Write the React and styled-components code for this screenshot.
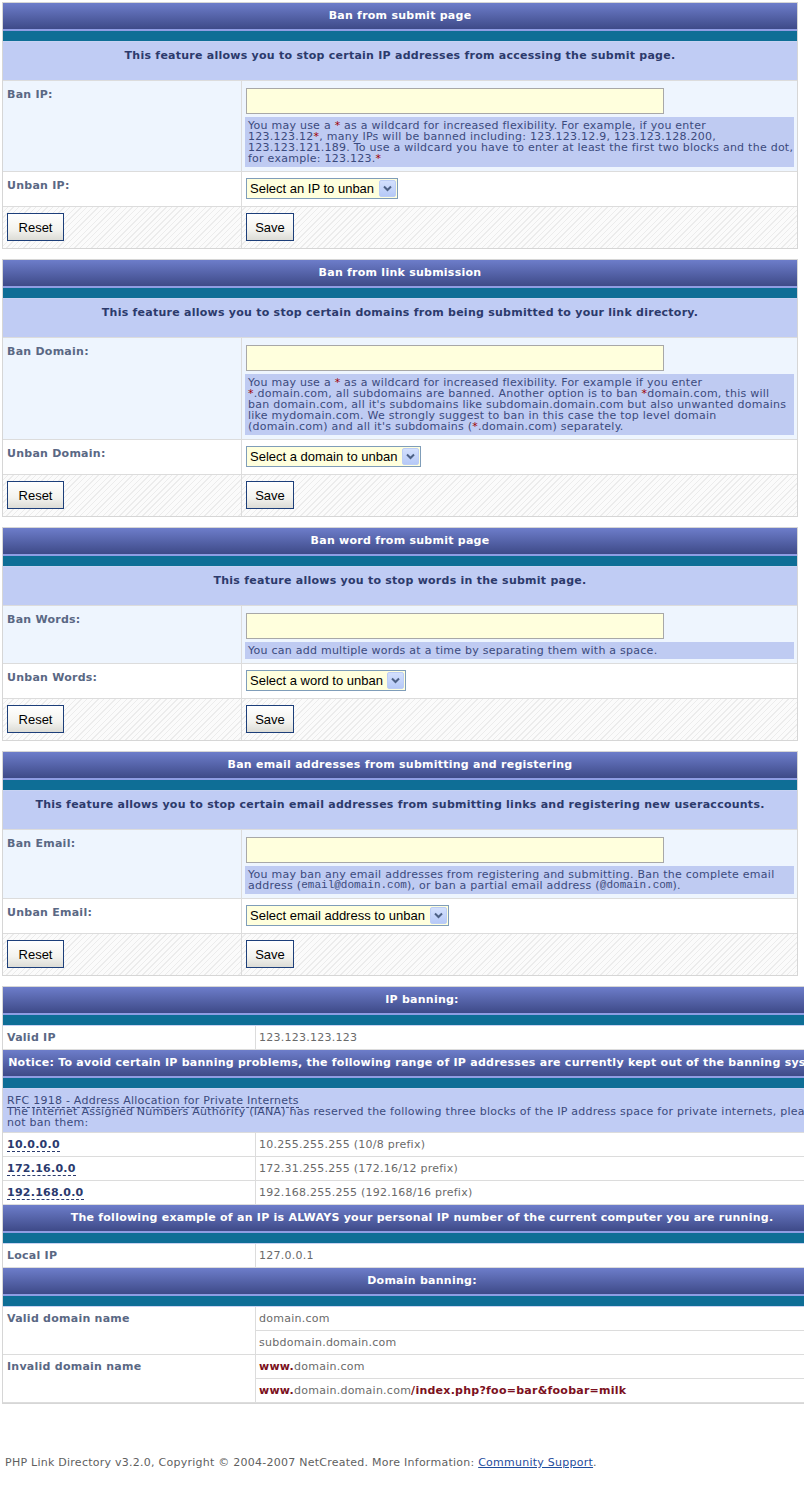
import React from 'react';
import styled, { createGlobalStyle } from 'styled-components';

const GlobalStyle = createGlobalStyle`
  html, body { margin: 0; padding: 0; background: #fff; overflow-x: hidden; }
  body {
    font-family: "DejaVu Sans", Verdana, sans-serif;
    font-size: 11px;
    letter-spacing: 0.25px;
    color: #3b4a7d;
  }
`;

const Page = styled.div`
  padding: 2px 0 0 2px;
  width: 860px;
`;

const Section = styled.section`
  width: ${p => p.$width}px;
  border: 1px solid #d6d6d6;
  margin-bottom: 10px;
  background: #fff;
`;

const HeaderBar = styled.div`
  height: 26px;
  line-height: 26px;
  background: linear-gradient(#6d7dca, #3e4a88);
  border-bottom: 2px solid #8f9de3;
  color: #fff;
  font-weight: bold;
  text-align: center;
  white-space: nowrap;
`;

const TealBar = styled.div`
  height: 10px;
  background: #0e6e96;
  border-bottom: 1px solid #c8d2f2;
`;

const Desc = styled.div`
  background: #c0ccf4;
  color: #2c3a6c;
  font-weight: bold;
  text-align: center;
  line-height: 14px;
  padding: 7px 4px 17px;
  border-bottom: 1px solid #dcdcdc;
`;

const rowBg = {
  alt: '#eef5fe',
  plain: '#ffffff',
  hatch: 'repeating-linear-gradient(135deg, #fbfbfb 0px, #fbfbfb 3px, #ececec 3px, #ececec 4px)',
};

const FormRow = styled.div`
  display: grid;
  grid-template-columns: 239px minmax(0, 1fr);
  background: ${p => rowBg[p.$tone]};
  border-bottom: ${p => (p.$last ? 'none' : '1px solid #dcdcdc')};
`;

const LabelCell = styled.div`
  border-right: 1px solid #dcdcdc;
  padding: 7px 4px;
  line-height: 13px;
  font-weight: bold;
  color: #5a6884;
`;

const ValueCell = styled.div`
  min-width: 0;
  padding: ${p => p.$pad};
`;

const ButtonCell = styled.div`
  display: flex;
  align-items: flex-start;
  padding: 6px 4px 7px;
  border-right: ${p => (p.$divider ? '1px solid #dcdcdc' : 'none')};
`;

const TextInput = styled.input`
  display: block;
  box-sizing: border-box;
  width: 418px;
  height: 26px;
  margin: 0;
  background: #ffffdd;
  border: 1px solid #a8a8a8;
  font-family: "DejaVu Sans", Verdana, sans-serif;
  font-size: 11px;
`;

const Hint = styled.div`
  margin: 3px 0 0 -1px;
  padding: 3px;
  background: #bfcbf2;
  line-height: 11px;
  color: #3b4a7d;
  white-space: nowrap;
`;

const Star = styled.span`
  color: #a00000;
`;

const Mono = styled.span`
  font-family: "Liberation Mono", "Courier New", monospace;
  font-size: 11px;
  line-height: 11px;
  vertical-align: top;
  letter-spacing: 0;
`;

const SelectWrap = styled.div`
  display: flex;
  align-items: center;
  box-sizing: border-box;
  width: ${p => p.$width}px;
  height: 21px;
  border: 1px solid #7f9db9;
  background: #ffffdd;
`;

const Select = styled.select`
  appearance: none;
  -webkit-appearance: none;
  flex: 1;
  min-width: 0;
  height: 19px;
  border: none;
  background: transparent;
  padding: 0 0 0 3px;
  margin: 0;
  font-family: "Liberation Sans", Arial, sans-serif;
  font-size: 13px;
  letter-spacing: 0;
  color: #000;
  outline: none;
`;

const ArrowBox = styled.span`
  display: flex;
  align-items: center;
  justify-content: center;
  box-sizing: border-box;
  width: 17px;
  height: 17px;
  margin-right: 1px;
  border: 1px solid #bccdf5;
  border-radius: 2px;
  background: linear-gradient(#d3e0fd, #b6c9f7);
`;

const Button = styled.button`
  box-sizing: border-box;
  width: ${p => p.$w}px;
  height: 28px;
  padding: 0;
  border: 1px solid #1d3f7a;
  border-radius: 0;
  background: linear-gradient(#ffffff, #f3f3ef 60%, #dcdcd6);
  font-family: "Liberation Sans", Arial, sans-serif;
  font-size: 13px;
  letter-spacing: 0;
  color: #000;
`;

const InfoGrid = styled.div`
  display: grid;
  grid-template-columns: 253px minmax(0, 1fr);
`;

const InfoLabel = styled.div`
  grid-row: span ${p => p.$span || 1};
  border-right: 1px solid #dcdcdc;
  border-bottom: 1px solid #dcdcdc;
  padding: 5px 4px;
  line-height: 13px;
  font-weight: bold;
  color: #5a6884;
`;

const InfoValue = styled.div`
  border-bottom: 1px solid #dcdcdc;
  padding: 5px 3px;
  line-height: 13px;
  color: #6a6a6a;
  white-space: nowrap;
`;

const DashLink = styled.a`
  font-weight: bold;
  color: #2b3a6e;
  text-decoration: none;
  border-bottom: 1px dashed #2b3a6e;
`;

const InfoDesc = styled.div`
  background: #c0ccf4;
  padding: 6px 4px 4px;
  line-height: 11px;
  color: #3b4a7d;
  border-bottom: 1px solid #dcdcdc;
  white-space: nowrap;
`;

const RfcLink = styled.span`
  border-bottom: 1px dashed #3b4a7d;
`;

const Red = styled.span`
  color: #7b1020;
  font-weight: bold;
`;

const Footer = styled.div`
  padding: 42px 3px 21px;
  color: #5f5f5f;
  line-height: 13px;
  border-bottom: 1px solid #eeeeee;
  width: 800px;
`;

const FooterLink = styled.a`
  color: #1f4d9c;
  text-decoration: underline;
`;

const Chevron = () => (
  <svg width="9" height="7" viewBox="0 0 9 7">
    <path d="M1 1.5 L4.5 5 L8 1.5" fill="none" stroke="#4d6185" strokeWidth="2" />
  </svg>
);

const SelectBox = ({ width, text }) => (
  <SelectWrap $width={width}>
    <Select defaultValue="">
      <option value="">{text}</option>
    </Select>
    <ArrowBox><Chevron /></ArrowBox>
  </SelectWrap>
);

const BanSection = ({ title, desc, banLabel, unbanLabel, hint, selectText, selectWidth }) => (
  <Section $width={794}>
    <HeaderBar>{title}</HeaderBar>
    <TealBar />
    <Desc>{desc}</Desc>
    <FormRow $tone="alt">
      <LabelCell>{banLabel}</LabelCell>
      <ValueCell $pad="7px 3px 4px 4px">
        <TextInput type="text" />
        <Hint>{hint}</Hint>
      </ValueCell>
    </FormRow>
    <FormRow $tone="plain">
      <LabelCell>{unbanLabel}</LabelCell>
      <ValueCell $pad="6px 4px 7px 4px">
        <SelectBox width={selectWidth} text={selectText} />
      </ValueCell>
    </FormRow>
    <FormRow $tone="hatch" $last>
      <ButtonCell $divider>
        <Button type="reset" $w={57}>Reset</Button>
      </ButtonCell>
      <ButtonCell>
        <Button type="submit" $w={48}>Save</Button>
      </ButtonCell>
    </FormRow>
  </Section>
);

export default function App() {
  return (
    <>
      <GlobalStyle />
      <Page>
        <BanSection
          title="Ban from submit page"
          desc="This feature allows you to stop certain IP addresses from accessing the submit page."
          banLabel="Ban IP:"
          unbanLabel="Unban IP:"
          selectText="Select an IP to unban"
          selectWidth={152}
          hint={<>
            You may use a <Star>*</Star> as a wildcard for increased flexibility. For example, if you enter<br />
            123.123.12<Star>*</Star>, many IPs will be banned including: 123.123.12.9, 123.123.128.200,<br />
            123.123.121.189. To use a wildcard you have to enter at least the first two blocks and the dot,<br />
            for example: 123.123.<Star>*</Star>
          </>}
        />
        <BanSection
          title="Ban from link submission"
          desc="This feature allows you to stop certain domains from being submitted to your link directory."
          banLabel="Ban Domain:"
          unbanLabel="Unban Domain:"
          selectText="Select a domain to unban"
          selectWidth={175}
          hint={<>
            You may use a <Star>*</Star> as a wildcard for increased flexibility. For example if you enter<br />
            <Star>*</Star>.domain.com, all subdomains are banned. Another option is to ban <Star>*</Star>domain.com, this will<br />
            ban domain.com, all it's subdomains like subdomain.domain.com but also unwanted domains<br />
            like mydomain.com. We strongly suggest to ban in this case the top level domain<br />
            (domain.com) and all it's subdomains (<Star>*</Star>.domain.com) separately.
          </>}
        />
        <BanSection
          title="Ban word from submit page"
          desc="This feature allows you to stop words in the submit page."
          banLabel="Ban Words:"
          unbanLabel="Unban Words:"
          selectText="Select a word to unban"
          selectWidth={160}
          hint="You can add multiple words at a time by separating them with a space."
        />
        <BanSection
          title="Ban email addresses from submitting and registering"
          desc="This feature allows you to stop certain email addresses from submitting links and registering new useraccounts."
          banLabel="Ban Email:"
          unbanLabel="Unban Email:"
          selectText="Select email address to unban"
          selectWidth={203}
          hint={<>
            You may ban any email addresses from registering and submitting. Ban the complete email<br />
            address (<Mono>email@domain.com</Mono>), or ban a partial email address (<Mono>@domain.com</Mono>).
          </>}
        />

        <Section $width={838}>
          <HeaderBar>IP banning:</HeaderBar>
          <TealBar />
          <InfoGrid>
            <InfoLabel>Valid IP</InfoLabel>
            <InfoValue>123.123.123.123</InfoValue>
          </InfoGrid>
          <HeaderBar>Notice: To avoid certain IP banning problems, the following range of IP addresses are currently kept out of the banning system!</HeaderBar>
          <TealBar />
          <InfoDesc>
            <RfcLink>RFC 1918 - Address Allocation for Private Internets</RfcLink><br />
            The Internet Assigned Numbers Authority (IANA) has reserved the following three blocks of the IP address space for private internets, please do<br />
            not ban them:
          </InfoDesc>
          <InfoGrid>
            <InfoLabel><DashLink href="#">10.0.0.0</DashLink></InfoLabel>
            <InfoValue>10.255.255.255 (10/8 prefix)</InfoValue>
            <InfoLabel><DashLink href="#">172.16.0.0</DashLink></InfoLabel>
            <InfoValue>172.31.255.255 (172.16/12 prefix)</InfoValue>
            <InfoLabel><DashLink href="#">192.168.0.0</DashLink></InfoLabel>
            <InfoValue>192.168.255.255 (192.168/16 prefix)</InfoValue>
          </InfoGrid>
          <HeaderBar>The following example of an IP is ALWAYS your personal IP number of the current computer you are running.</HeaderBar>
          <TealBar />
          <InfoGrid>
            <InfoLabel>Local IP</InfoLabel>
            <InfoValue>127.0.0.1</InfoValue>
          </InfoGrid>
          <HeaderBar>Domain banning:</HeaderBar>
          <TealBar />
          <InfoGrid>
            <InfoLabel $span={2}>Valid domain name</InfoLabel>
            <InfoValue>domain.com</InfoValue>
            <InfoValue>subdomain.domain.com</InfoValue>
            <InfoLabel $span={2}>Invalid domain name</InfoLabel>
            <InfoValue><Red>www.</Red>domain.com</InfoValue>
            <InfoValue><Red>www.</Red>domain.domain.com<Red>/index.php?foo=bar&amp;foobar=milk</Red></InfoValue>
          </InfoGrid>
        </Section>

        <Footer>
          PHP Link Directory v3.2.0, Copyright © 2004-2007 NetCreated. More Information: <FooterLink href="#">Community Support</FooterLink>.
        </Footer>
      </Page>
    </>
  );
}
